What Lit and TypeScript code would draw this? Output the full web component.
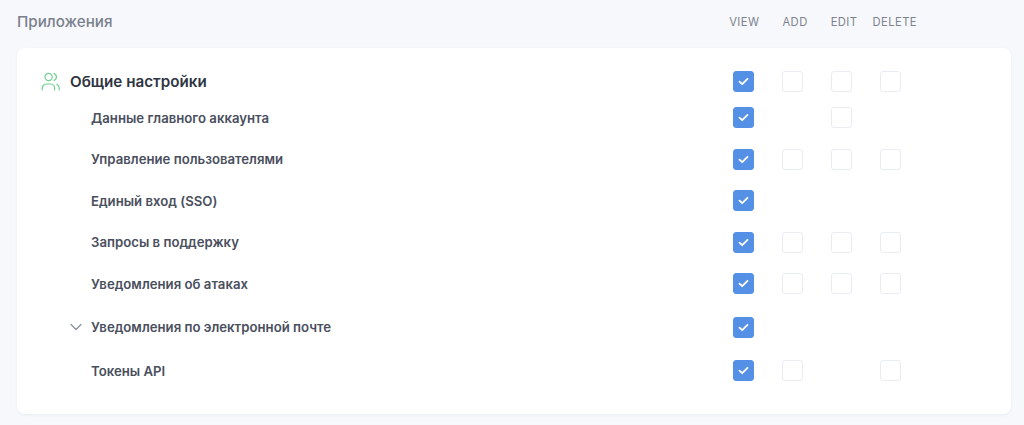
import {css, html, LitElement, nothing} from "lit";
import {customElement} from "lit/decorators.js";
import {classMap} from "lit/directives/class-map.js";

type Row = {label: string; boxes: (boolean | null)[]; chevron?: boolean; wide?: boolean};

const rows: Row[] = [
  {label: "Данные главного аккаунта", boxes: [true, null, false, null]},
  {label: "Управление пользователями", boxes: [true, false, false, false]},
  {label: "Единый вход (SSO)", boxes: [true, null, null, null]},
  {label: "Запросы в поддержку", boxes: [true, false, false, false]},
  {label: "Уведомления об атаках", boxes: [true, false, false, false]},
  {label: "Уведомления по электронной почте", boxes: [true, null, null, null], chevron: true, wide: true},
  {label: "Токены API", boxes: [true, false, null, false], wide: true},
];

@customElement("app-root")
export class AppRoot extends LitElement {
  static override styles = css`
    :host {
      display: block;
      height: 425px;
      overflow: hidden;
      background: #f7f8fc;
      font-family: Inter, "Liberation Sans", sans-serif;
    }
    .head {
      display: flex;
      align-items: center;
      height: 48px;
      padding: 0 107px 5px 17px;
      box-sizing: border-box;
    }
    .title {
      flex: 1;
      font-size: 15.2px;
      font-weight: 500;
      color: #7a808c;
    }
    .cols {
      display: flex;
      gap: 23px;
      font-size: 11.2px;
      letter-spacing: 0.45px;
      color: #7d828c;
    }
    .cols .last {
      margin-left: -8px;
    }
    .card {
      margin: 0 13px 0 17px;
      height: 366px;
      padding-top: 16px;
      box-sizing: border-box;
      background: #fff;
      border-radius: 8px;
      box-shadow: 0 1px 3px rgba(40, 50, 80, 0.06);
    }
    .row {
      display: flex;
      align-items: center;
      height: 35px;
      padding-right: 110px;
    }
    .top {
      padding-left: 24px;
    }
    .list {
      display: flex;
      flex-direction: column;
      gap: 6.5px;
      margin-top: 1px;
    }
    .wide {
      margin-top: 2px;
    }
    .group {
      flex: 1;
      display: flex;
      align-items: center;
      gap: 10px;
      font-size: 15.2px;
      font-weight: 600;
      color: #2f3542;
    }
    .label {
      flex: 1;
      display: flex;
      align-items: center;
      padding-left: 74px;
      position: relative;
      font-size: 13.2px;
      font-weight: 600;
      color: #4a4f5e;
    }
    .chevron {
      position: absolute;
      left: 53px;
      top: 50%;
      margin-top: -4px;
    }
    .boxes {
      display: grid;
      grid-template-columns: repeat(4, 21px);
      column-gap: 28px;
    }
    .box {
      width: 21px;
      height: 21px;
      box-sizing: border-box;
      border: 1px solid #e9ecf4;
      border-radius: 3px;
      background: #fff;
    }
    .box.on {
      display: flex;
      align-items: center;
      justify-content: center;
      border-color: #5490e6;
      background: #5490e6;
    }
  `;

  private box(state: boolean | null) {
    if (state === null) return html`<span></span>`;
    if (!state) return html`<span class="box"></span>`;
    return html`<span class="box on">
      <svg width="11" height="9" viewBox="0 0 11 9" fill="none">
        <path d="M1.5 4.6 4.2 7.2 9.5 1.8" stroke="#fff" stroke-width="1.8" stroke-linecap="round" stroke-linejoin="round" />
      </svg>
    </span>`;
  }

  private boxes(states: (boolean | null)[]) {
    return html`<div class="boxes">${states.map((s) => this.box(s))}</div>`;
  }

  override render() {
    return html`
      <div class="head">
        <div class="title">Приложения</div>
        <div class="cols">
          <span>VIEW</span><span>ADD</span><span>EDIT</span><span class="last">DELETE</span>
        </div>
      </div>
      <div class="card">
        <div class="row top">
          <div class="group">
            <svg width="19" height="19" viewBox="0 0 19 19" fill="none" stroke="#72d190" stroke-width="1.2" stroke-linecap="round">
              <circle cx="7.6" cy="5" r="3.6" />
              <path d="M1.2 18v-1.6A4.4 4.4 0 0 1 5.6 12h4a4.4 4.4 0 0 1 4 4.4V18" />
              <path d="M13 1.6a3.6 3.6 0 0 1 0 6.8" />
              <path d="M15.8 12.3a4.4 4.4 0 0 1 2.4 4V18" />
            </svg>
            Общие настройки
          </div>
          ${this.boxes([true, false, false, false])}
        </div>
        <div class="list">
          ${rows.map(
            (r) => html`<div class=${classMap({row: true, wide: !!r.wide})}>
              <div class="label">
                ${r.chevron
                  ? html`<svg class="chevron" width="12" height="8" viewBox="0 0 12 8" fill="none" stroke="#8b909b" stroke-width="1.2" stroke-linecap="round" stroke-linejoin="round">
                      <path d="M1 1.5 6 6.5 11 1.5" />
                    </svg>`
                  : nothing}
                ${r.label}
              </div>
              ${this.boxes(r.boxes)}
            </div>`,
          )}
        </div>
      </div>
    `;
  }
}

declare global {
  interface HTMLElementTagNameMap {
    "app-root": AppRoot;
  }
}
